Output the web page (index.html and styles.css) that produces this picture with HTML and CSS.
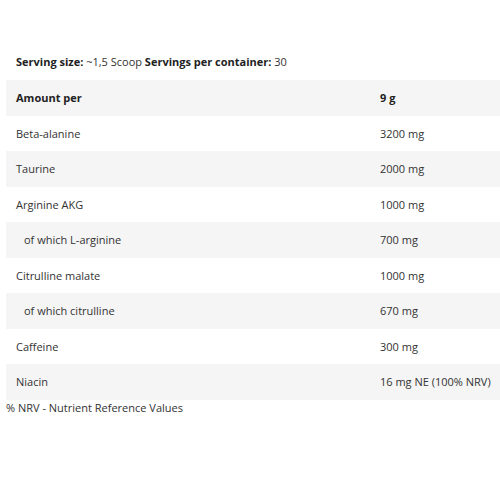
FILE: index.html
```html
<!DOCTYPE html>
<html>
<head>
<meta charset="utf-8">
<link rel="stylesheet" href="styles.css">
</head>
<body>
<div class="page">
  <p class="serving"><b>Serving size:</b> ~1,5 Scoop <b>Servings per container:</b> 30</p>
  <table class="facts">
    <tr class="head"><td class="name">Amount per</td><td class="val">9 g</td></tr>
    <tr><td class="name">Beta-alanine</td><td class="val">3200 mg</td></tr>
    <tr><td class="name">Taurine</td><td class="val">2000 mg</td></tr>
    <tr><td class="name">Arginine AKG</td><td class="val">1000 mg</td></tr>
    <tr><td class="name sub">of which L-arginine</td><td class="val">700 mg</td></tr>
    <tr><td class="name">Citrulline malate</td><td class="val">1000 mg</td></tr>
    <tr><td class="name sub">of which citrulline</td><td class="val">670 mg</td></tr>
    <tr><td class="name">Caffeine</td><td class="val">300 mg</td></tr>
    <tr><td class="name">Niacin</td><td class="val">16 mg NE (100% NRV)</td></tr>
  </table>
  <p class="note">% NRV - Nutrient Reference Values</p>
</div>
</body>
</html>
```
FILE: styles.css
```css
html, body {
  margin: 0;
  padding: 0;
  background: #fff;
}
.page {
  padding: 0 0 0 6px;
  font-family: "Open Sans", "Liberation Sans", sans-serif;
  font-size: 11px;
  color: #333;
}
.serving {
  margin: 0;
  padding: 54px 0 0 10px;
  height: 26px;
  line-height: 16px;
  color: #333;
}
.serving b {
  color: #222;
}
.facts {
  width: 494px;
  border-collapse: collapse;
  border-spacing: 0;
}
.facts tr:nth-child(odd) {
  background: #f5f5f5;
}
.facts td {
  height: 35.5px;
  padding: 0;
  vertical-align: middle;
}
.facts td.name {
  width: 364px;
  padding-left: 10px;
}
.facts td.sub {
  padding-left: 18px;
  width: 356px;
}
.facts tr.head td {
  font-weight: 700;
  color: #222;
}
.note {
  margin: 0;
  line-height: 16px;
  color: #333;
}
```
